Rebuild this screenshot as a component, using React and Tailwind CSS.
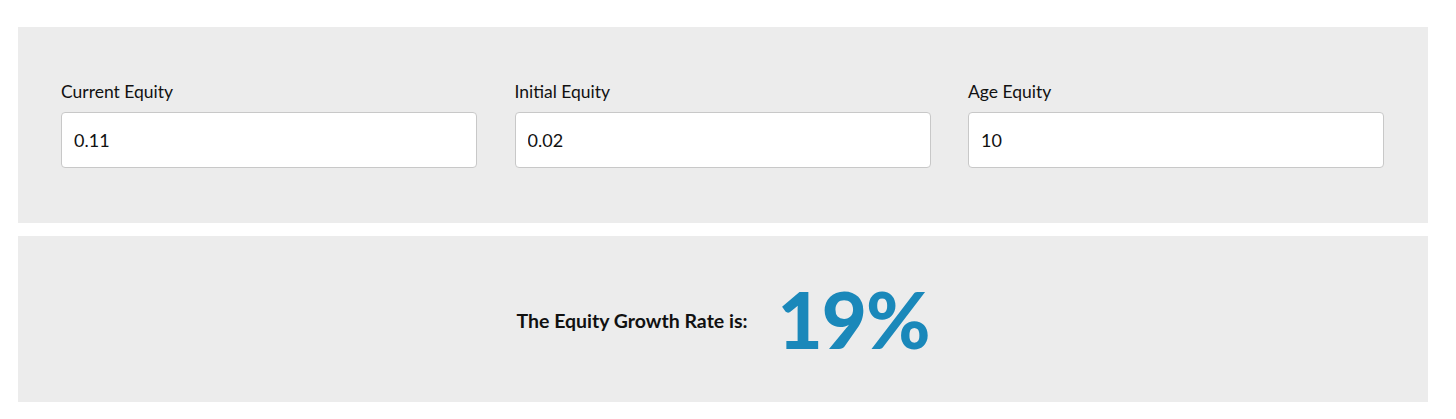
export default function App() {
  const fields = [
    { label: "Current Equity", value: "0.11" },
    { label: "Initial Equity", value: "0.02" },
    { label: "Age Equity", value: "10" },
  ];
  return (
    <div className="w-[1456px] h-[419px] bg-white pt-[27px] px-[18px] [font-family:Lato,'Liberation_Sans',sans-serif]">
      <div className="w-[1410px] flex flex-col gap-[13px]">
        <div className="h-[196px] bg-[#ececec] pl-[43px] pr-[44px] pt-[53px]">
          <div className="grid grid-cols-3 gap-x-[37.5px]">
            {fields.map((f) => (
              <div key={f.label} className="flex flex-col">
                <label className="text-[17.5px] leading-[24px] text-[#111] mb-[8px]">{f.label}</label>
                <input
                  readOnly
                  value={f.value}
                  className="h-[56px] w-full bg-white border border-[#c8c8c8] rounded-[4px] px-[12px] text-[18px] text-[#111] outline-none [font-family:Lato,'Liberation_Sans',sans-serif]"
                />
              </div>
            ))}
          </div>
        </div>
        <div className="h-[166px] bg-[#ececec] flex items-center justify-center gap-[30px]">
          <span className="text-[19.5px] font-bold text-[#111] mt-[4px]">The Equity Growth Rate is:</span>
          <span className="text-[78px] font-black leading-none text-[#1a88ba] tracking-[-1px]">19%</span>
        </div>
      </div>
    </div>
  );
}
